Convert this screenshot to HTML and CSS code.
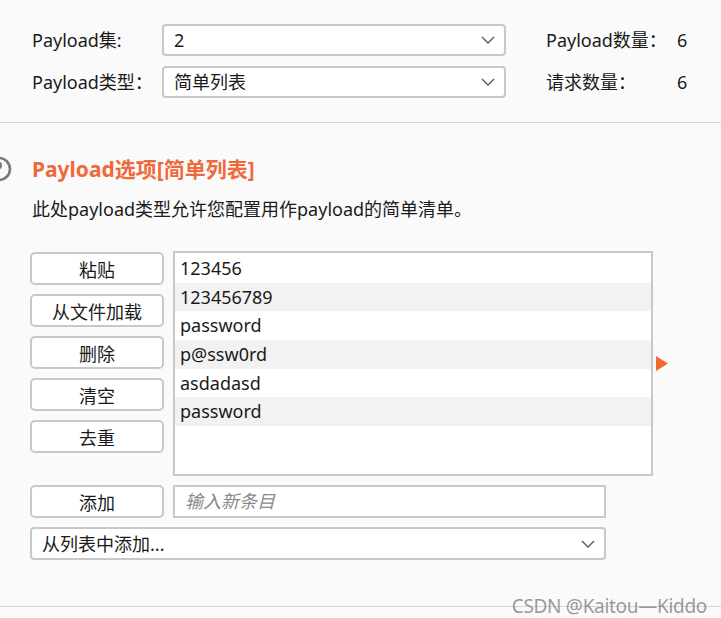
FILE: index.html
```html
<!DOCTYPE html>
<html lang="zh-CN">
<head>
  <meta charset="UTF-8">
  <title>Payload</title>
  <link rel="stylesheet" href="styles.css">
</head>
<body>

<!-- Payload set / type -->
<div class="top">
  <div class="top-grid">
    <span class="label">Payload集:</span>
    <div class="select">
      <span>2</span>
      <svg class="chev" width="14" height="8" viewBox="0 0 14 8"><path d="M1 1 L7 7 L13 1" fill="none" stroke="#555" stroke-width="1.3"/></svg>
    </div>
    <span class="label">Payload数量：</span>
    <span class="value">6</span>

    <span class="label">Payload类型：</span>
    <div class="select">
      <span>简单列表</span>
      <svg class="chev" width="14" height="8" viewBox="0 0 14 8"><path d="M1 1 L7 7 L13 1" fill="none" stroke="#555" stroke-width="1.3"/></svg>
    </div>
    <span class="label">请求数量：</span>
    <span class="value">6</span>
  </div>
</div>

<!-- Payload options -->
<div class="section">
  <div class="title-row">
    <svg class="help" width="26" height="26" viewBox="0 0 26 26">
      <circle cx="13" cy="13" r="11" fill="none" stroke="#7a7a7a" stroke-width="2.6"/>
      <path d="M8.5 9.5 Q9 6.5 12 6.5 Q15 6.5 15 9.5 Q15 11.5 12.5 12.8 L12 15" fill="none" stroke="#7a7a7a" stroke-width="2.2"/>
    </svg>
    <h2 class="title">Payload选项[简单列表]</h2>
  </div>
  <p class="desc">此处payload类型允许您配置用作payload的简单清单。</p>

  <div class="list-area">
    <div class="btn-col">
      <button class="btn">粘贴</button>
      <button class="btn">从文件加载</button>
      <button class="btn">删除</button>
      <button class="btn">清空</button>
      <button class="btn">去重</button>
    </div>
    <div class="list">
      <div class="row">123456</div>
      <div class="row">123456789</div>
      <div class="row">password</div>
      <div class="row">p@ssw0rd</div>
      <div class="row">asdadasd</div>
      <div class="row">password</div>
    </div>
    <svg class="arrow" width="12" height="15" viewBox="0 0 12 15"><path d="M0 0 L12 7.5 L0 15 Z" fill="#f26a32"/></svg>
  </div>

  <div class="add-row">
    <button class="btn">添加</button>
    <div class="input">输入新条目</div>
  </div>

  <div class="select wide">
    <span>从列表中添加...</span>
    <svg class="chev" width="14" height="8" viewBox="0 0 14 8"><path d="M1 1 L7 7 L13 1" fill="none" stroke="#555" stroke-width="1.3"/></svg>
  </div>

  <div class="watermark">CSDN @Kaitou—Kiddo</div>
</div>

</body>
</html>
```

FILE: styles.css
```css
* { box-sizing: border-box; }

body {
  margin: 0;
  background: #fafafa;
  color: #1a1a1a;
  font-family: "Noto Sans", "Noto Sans CJK SC", sans-serif;
  font-size: 18px;
  line-height: 24px;
}

.top {
  padding: 24px 0 24px 32px;
  border-bottom: 1px solid #d6d6d6;
}

.top-grid {
  display: grid;
  grid-template-columns: 130px 384px 131px 30px;
  row-gap: 10px;
  align-items: center;
}

.select {
  display: flex;
  align-items: center;
  justify-content: space-between;
  width: 344px;
  height: 32px;
  padding: 0 9px 0 10px;
  background: #fff;
  border: 2px solid #c8c8c8;
  border-radius: 4px;
}

.select.wide {
  width: 576px;
  height: 33px;
}

.chev {
  flex: none;
}

/* options section */
.section {
  position: relative;
  padding: 32px 0 46px 30px;
  border-bottom: 1px solid #d6d6d6;
  margin-bottom: 11px;
}

.title-row {
  display: flex;
  align-items: center;
  margin-left: -44px;
}

.help {
  margin-left: 0;
  margin-right: 20px;
}

.title {
  margin: 0;
  color: #f0693a;
  font-size: 21px;
  font-weight: bold;
  line-height: 28px;
}

.desc {
  margin: 14px 0 30px 2px;
}

.list-area {
  display: flex;
  gap: 9px;
  align-items: flex-start;
}

.btn-col {
  display: flex;
  flex-direction: column;
  gap: 9px;
  padding-top: 1px;
}

.btn {
  width: 134px;
  height: 33px;
  padding: 0;
  background: #fff;
  border: 2px solid #c8c8c8;
  border-radius: 5px;
  font-family: inherit;
  font-size: 18px;
  color: #1a1a1a;
}

.list {
  width: 480px;
  height: 225px;
  padding-top: 1px;
  background: #fff;
  border: 2px solid #c8c8c8;
}

.row {
  height: 28.67px;
  padding-left: 5px;
  line-height: 28px;
}

.row:nth-child(even) {
  background: #f2f2f2;
}

.arrow {
  align-self: center;
  margin-left: -6px;
}

.add-row {
  display: flex;
  gap: 9px;
  margin: 9px 0;
}

.input {
  width: 433px;
  height: 33px;
  padding-left: 10px;
  background: #fff;
  border: 2px solid #c8c8c8;
  color: #8a8a8a;
  font-style: italic;
  line-height: 29px;
}

.watermark {
  position: absolute;
  right: 14px;
  bottom: -12px;
  color: rgba(120, 120, 120, 0.75);
  font-size: 19px;
  letter-spacing: -0.3px;
}
```
